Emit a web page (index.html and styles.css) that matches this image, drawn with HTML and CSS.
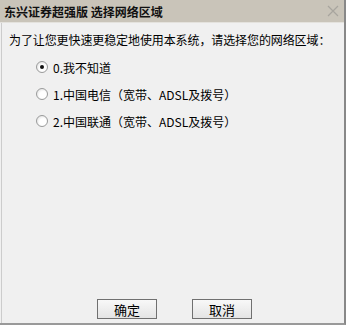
FILE: index.html
```html
<!DOCTYPE html>
<html><head><meta charset="utf-8"><link rel="stylesheet" href="styles.css"></head>
<body>
<div class="win">
  <div class="title">
    <span class="title-text">东兴证券超强版 选择网络区域</span>
    <svg class="close" width="12" height="12" viewBox="0 0 12 12"><path d="M1 1L11 11M11 1L1 11" stroke="#a8a59e" stroke-width="1.2" fill="none"/></svg>
  </div>
  <div class="body">
    <div class="prompt">为了让您更快速更稳定地使用本系统，请选择您的网络区域：</div>
    <div class="opts">
      <div class="opt"><span class="radio on"></span><span>0.我不知道</span></div>
      <div class="opt"><span class="radio"></span><span>1.中国电信（宽带、ADSL及拨号）</span></div>
      <div class="opt"><span class="radio"></span><span>2.中国联通（宽带、ADSL及拨号）</span></div>
    </div>
    <div class="buttons">
      <button class="btn">确定</button>
      <button class="btn">取消</button>
    </div>
  </div>
</div>
</body></html>
```
FILE: styles.css
```css
html,body{margin:0;padding:0;background:#f0f0f0;}
body{font-family:"SimSun","Noto Sans CJK SC",sans-serif;font-size:12px;color:#000;}
.win{width:346px;height:325px;box-sizing:border-box;display:flex;flex-direction:column;border-right:2px solid #888;border-bottom:2px solid #999;}
.title{height:22px;background:#c9c4b9;display:flex;align-items:center;justify-content:space-between;padding:0 4px 0 4px;border-bottom:1px solid #e4e2dd;}
.title-text{font-weight:bold;font-size:12px;color:#111;}
.close{margin-right:1px;}
.body{flex:1;display:flex;flex-direction:column;border-left:1px solid #ccc;margin-left:1px;}
.prompt{padding:8px 0 0 7px;font-size:12px;height:18px;line-height:18px;white-space:nowrap;letter-spacing:-0.1px;}
.opts{display:flex;flex-direction:column;gap:9px;padding:9px 0 0 34px;}
.opt{display:flex;align-items:center;height:18px;gap:5px;font-size:12px;}
.radio{width:12px;height:12px;border-radius:50%;box-sizing:border-box;border:1px solid #9a9b9b;background:radial-gradient(circle at 60% 60%,#fff 40%,#d6d6d6 100%);position:relative;}
.radio.on::after{content:"";position:absolute;left:3px;top:3px;width:4px;height:4px;border-radius:50%;background:#111;}
.buttons{margin-top:auto;display:flex;gap:35px;padding:0 0 4px 95px;}
.btn{width:60px;height:20px;font-family:inherit;font-size:13px;background:linear-gradient(#f8f8f8,#e4e4e4);border:1px solid #707070;border-radius:0;padding:0;color:#000;}
```
